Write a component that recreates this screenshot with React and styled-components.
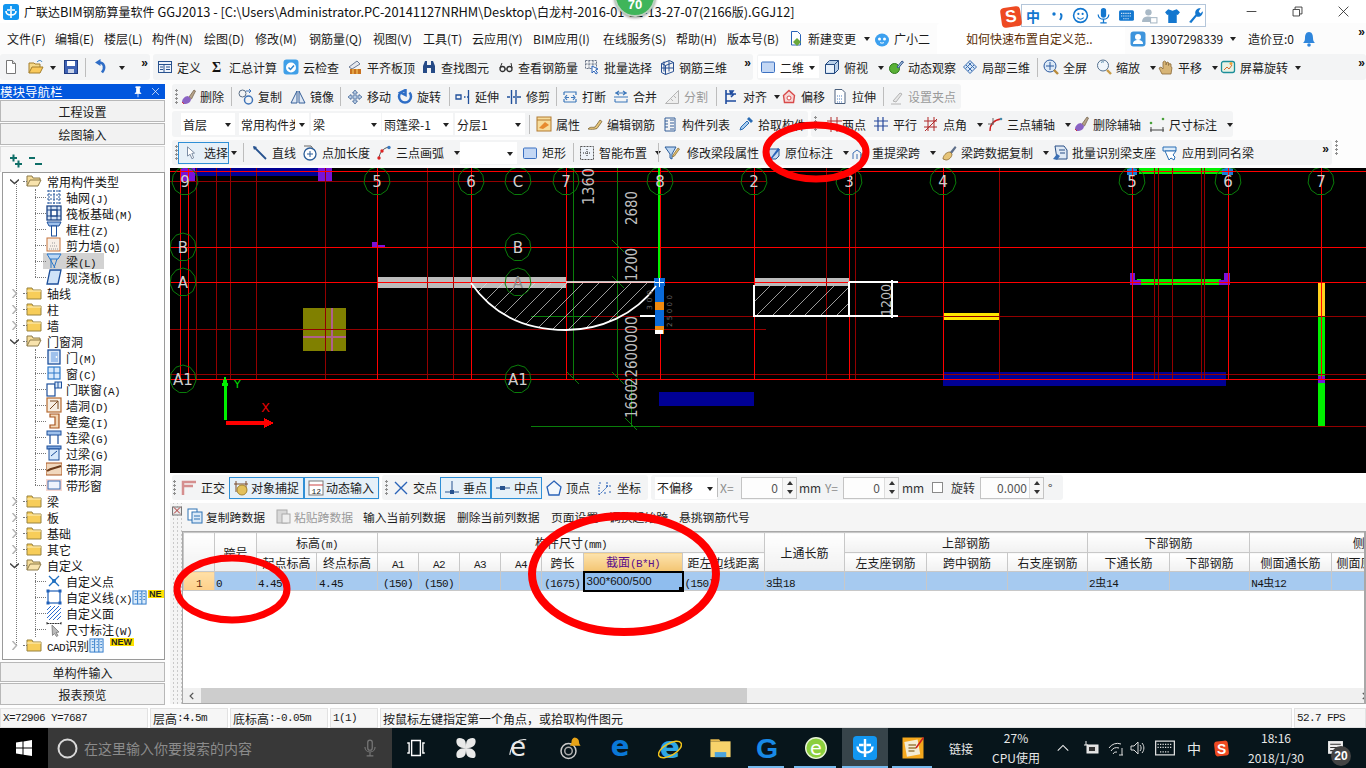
import React from "react";
import styled, { createGlobalStyle } from "styled-components";

const Global = createGlobalStyle`
  html, body { margin: 0; padding: 0; background: #fff; }
  body { font-family: "Noto Sans CJK SC", "Noto Sans", sans-serif; font-size: 12px; color: #1c1c1c; }
  * { box-sizing: border-box; }
`;

/* ---------- generic parts ---------- */
const Root = styled.div`
  position: relative; width: 1366px; height: 768px; overflow: hidden;
  display: flex; flex-direction: column; background: #fdfdfd;
`;
const Svg = styled.svg`
  width: ${p => p.$s || 16}px; height: ${p => p.$s || 16}px; flex: none; display: block;
  margin-left: ${p => p.$ml || 0}px; margin-right: ${p => p.$mr || 0}px;
`;
const Ic = ({ n, s, ml, mr }) => <Svg $s={s} $ml={ml} $mr={mr} viewBox="0 0 16 16">{I[n]}</Svg>;

const TitleBar = styled.div`
  height: 23px; flex: none; display: flex; align-items: center; background: #fff; padding-left: 3px;
`;
const TitleText = styled.div`
  margin-left: 5px; font-size: 12px; white-space: nowrap; color: #111;
`;
const TitleLatin = styled.span`
  font-size: 12.8px;
`;
const WinButtons = styled.div`
  margin-left: auto; display: flex; height: 23px;
`;
const WinBtn = styled.div`
  width: 46px; display: flex; align-items: center; justify-content: center; color: #222;
`;
const MenuBar = styled.div`
  height: 31px; flex: none; display: flex; align-items: center; background: #fcfcfc; position: relative;
`;
const MenuItem = styled.div`
  width: ${p => p.$w}px; flex: none; white-space: nowrap; display: flex; align-items: center; gap: 4px;
  margin-left: ${p => p.$ml || 0}px; color: #1a1a1a; font-size: 12px;
`;
const Hint = styled.div`
  width: 188px; height: 31px; margin-right: 5px; background: #fff; border-radius: 4px 4px 0 0; flex: none;
  color: #5a2e05; display: flex; align-items: center; padding-left: 29px;
`;
const Chev = styled.span`
  font: bold 12px/10px "Liberation Sans", sans-serif; letter-spacing: -1px; color: #111; flex: none;
  position: absolute; right: ${p => p.$r || 0}px; top: ${p => p.$t || 4}px;
`;
const Row = styled.div`
  height: ${p => p.$h}px; flex: none; display: flex; align-items: flex-start; padding-left: ${p => p.$pl || 0}px;
`;
const Seg = styled.div`
  position: relative; height: ${p => p.$h || 26}px; width: ${p => p.$w ? p.$w + "px" : "auto"}; flex: none;
  display: flex; align-items: center; background: #f3f4f5; border-radius: 3px;
  margin-left: ${p => p.$ml || 0}px; padding-left: ${p => p.$pl || 0}px;
`;
const Grip = styled.div`
  width: ${p => p.$w || 8}px; height: 16px; flex: none; margin-left: ${p => p.$ml || 0}px;
  background: radial-gradient(circle at 2.5px 1.5px, #8f8f8f 1px, transparent 1.2px) 0 0 / 5px 4px repeat-y;
`;
const ToolBox = styled.div`
  width: ${p => p.$w}px; flex: none; height: 20px; display: flex; align-items: center; white-space: nowrap;
  gap: ${p => p.$g ?? 4}px; color: ${p => p.$off ? "#9a9a9a" : "#1c1c1c"}; font-size: 12px;
`;
const Drop = styled.span`
  width: 0; height: 0; flex: none; margin-left: ${p => p.$ml ?? 6}px; margin-top: 1px;
  border-left: 3px solid transparent; border-right: 3px solid transparent; border-top: 4px solid #222;
`;
const Tool = ({ i, t, w, off, g, drop, dm }) => (
  <ToolBox $w={w} $off={off} $g={g}>
    {i && <Ic n={i} />}
    {t && <span>{t}</span>}
    {drop && <Drop $ml={dm} />}
  </ToolBox>
);
const Sep = styled.div`
  width: ${p => p.$w}px; height: 19px; flex: none; margin-left: ${p => p.$ml || 0}px;
  border-left: 1px solid #bdbdbd;
`;
const Flat = styled.div`
  width: ${p => p.$w}px; height: 22px; flex: none; display: flex; align-items: center; gap: ${p => p.$g ?? 4}px;
  padding-left: ${p => p.$pl ?? 5}px; border: 1px solid #2e8fd6; background: ${p => p.$bg || "#e6f0f8"};
  margin-left: ${p => p.$ml || 0}px; white-space: nowrap;
`;
const Combo = styled.div`
  width: ${p => p.$w}px; height: 22px; flex: none; margin-right: ${p => p.$mr || 0}px; background: #fff;
  display: flex; align-items: center; padding-left: 2px; position: relative; white-space: nowrap;
  &::after {
    content: ""; position: absolute; right: 4px; top: 10px; border-left: 3px solid transparent;
    border-right: 3px solid transparent; border-top: 4px solid #222;
  }
`;
const ComboText = styled.span`
  display: block; width: calc(100% - 14px); overflow: hidden;
`;
const Body = styled.div`
  height: 624px; flex: none; display: flex;
`;

/* ---------- module navigator ---------- */
const Nav = styled.aside`
  width: 165px; flex: none; display: flex; flex-direction: column;
`;
const NavHead = styled.div`
  height: 15px; flex: none; background: #0257de; color: #fff; display: flex; align-items: center;
  font-size: 12.5px; line-height: 15px; padding-right: 3px; margin-bottom: 1px; white-space: nowrap;
`;
const NavBtn = styled.div`
  height: ${p => p.$h}px; flex: none; margin-bottom: 1px; border: 1px solid #b8b8b8; background: #f2f2f2;
  display: flex; align-items: center; justify-content: center; color: #1c1c1c; font-size: 12px;
`;
const TreeBar = styled.div`
  height: 26px; flex: none; background: #f7f7f7; display: flex; align-items: center; gap: 3px; padding: 2px 0 0 7px;
  border: 1px solid #ddd; border-bottom: 0;
`;
const Tree = styled.div`
  height: 488px; flex: none; margin: 0 0 2px 2px; border: 1px solid #9a9a9a;
  background: #fff; overflow: hidden; position: relative;
`;
const Mono = styled.span`
  font-family: "Liberation Mono", monospace; font-size: 11px; letter-spacing: -.6px;
`;
const Sim = ({ t }) => t.split(/([\x00-\x7f]+)/).map((p, k) =>
  /^[\x00-\x7f]+$/.test(p) ? <Mono key={k}>{p}</Mono> : <span key={k}>{p}</span>);
const TreeRow = styled.div`
  height: 16px; display: flex; align-items: center; position: relative; white-space: nowrap; font-size: 12px;
  padding-left: ${p => p.$child ? 43 : 7}px; color: #151515;
  &::before {
    content: ""; position: absolute; top: 8px; left: ${p => p.$child ? 32 : 20}px;
    width: ${p => p.$child ? 11 : 4}px; border-top: 1px dotted #777;
  }
`;
const Guide = styled.div`
  position: absolute; left: ${p => p.$l}px; top: ${p => p.$t}px; height: ${p => p.$h}px; border-left: 1px dotted #777;
`;
const Chevron = styled.svg`
  width: 9px; height: 9px; flex: none; margin-right: 7px;
`;
const Sel = styled.span`
  display: flex; align-items: center; height: 16px; background: ${p => p.$on ? "#d2d2d2" : "transparent"};
  margin-left: -3px; padding: 0 ${p => p.$on ? 8 : 0}px 0 3px; gap: ${p => p.$child ? 4 : 5}px;
`;
const NewTag = styled.span`
  position: absolute; top: ${p => p.$t ?? 1}px; left: ${p => p.$l}px; font: bold 9px/8px "Liberation Sans", sans-serif;
  background: #ffe100; color: #222; padding: 0 1px; overflow: hidden; width: ${p => p.$w}px; height: 8px;
`;

/* ---------- main column ---------- */
const Gutter = styled.div`
  width: 5px; flex: none;
`;
const Main = styled.main`
  flex: 1; min-width: 0; display: flex; flex-direction: column;
`;
const Canvas = styled.svg`
  display: block; width: 1196px; height: 305px; flex: none; background: #000;
`;
const SnapBar = styled.div`
  height: 30px; flex: none; padding: 2px 0 0 2px; display: flex; align-items: flex-start; background: #fff;
`;
const Spin = styled.div`
  width: ${p => p.$w}px; height: 22px; flex: none; border: 1px solid #c4c4c4; background: #fdfdfd; position: relative;
  text-align: right; padding-right: ${p => p.$pr || 18}px; line-height: 20px; color: #555; font-size: 12px;
  margin-left: ${p => p.$ml || 0}px;
  &::after {
    content: ""; position: absolute; right: 0; top: 0; bottom: 0; width: 13px; border-left: 1px solid #ddd;
    background: #f6f6f6;
  }
`;
const SpinArrows = styled.span`
  position: absolute; right: 3px; top: 3px; z-index: 1; display: flex; flex-direction: column; gap: 5px;
  &::before { content: ""; border-left: 3px solid transparent; border-right: 3px solid transparent; border-bottom: 4px solid #333; }
  &::after { content: ""; border-left: 3px solid transparent; border-right: 3px solid transparent; border-top: 4px solid #333; }
`;
const SnapLabel = styled.span`
  flex: none; color: ${p => p.$dim ? "#8c8c8c" : "#333"}; margin-left: ${p => p.$ml || 0}px; width: ${p => p.$w ? p.$w + "px" : "auto"};
  white-space: nowrap;
`;
const Check = styled.span`
  width: 11px; height: 11px; flex: none; border: 1px solid #8a8a8a; background: #fff; margin-left: ${p => p.$ml || 0}px;
`;

const TablePanel = styled.section`
  height: 201px; flex: none; display: flex; background: #f4f4f4; position: relative;
`;
const TableGrip = styled.div`
  width: 12px; flex: none; padding: 3px 0 0 2px;
  background: radial-gradient(circle at 4px 2px, #c9c9c9 1px, transparent 1.2px) 0 14px / 4px 4px;
`;
const TableMain = styled.div`
  flex: 1; min-width: 0; display: flex; flex-direction: column;
`;
const TableTools = styled.div`
  height: 28px; flex: none; display: flex; align-items: center; padding-left: 5px; padding-bottom: 2px; background: #f5f5f5;
`;
const TableAction = styled.div`
  width: ${p => p.$w}px; flex: none; display: flex; align-items: center; gap: 3px; white-space: nowrap;
  color: ${p => p.$off ? "#9a9a9a" : "#1c1c1c"}; font-size: 11.8px;
`;
const TableWrap = styled.div`
  flex: 1; min-height: 0; background: #fff; border: 1px solid #a8a8a8; border-right-width: 2px; overflow: hidden; position: relative;
  display: flex; flex-direction: column;
`;
const Grid = styled.table`
  table-layout: fixed; border-collapse: collapse; width: ${p => p.$w}px; font-size: 12px; flex: none;
  th, td { border: 1px solid #c8c8c8; padding: 0; text-align: center; white-space: nowrap; overflow: hidden; }
  th { font-weight: 400; background: linear-gradient(#fff, #f1f1f1); color: #1c1c1c; }
  td { background: #a6caf0; height: 19px; color: #141414; }
`;
const TH = styled.tr`
  height: ${p => p.$h}px;
`;
const HotTh = styled.th`
  && { background: linear-gradient(#fde3ae, #f3c572); color: #5b0f8a; }
`;
const RowHead = styled.td`
  && { background: linear-gradient(#ffe0a8, #fdcf88); color: #5a2a10; }
`;
const LeftCell = styled.td`
  && { text-align: left; padding-left: ${p => p.$pl ?? 1}px; }
`;
const ActiveCell = styled.td`
  && { background: #8fbdee; text-align: left; padding-left: 2px; border: 2px solid #000; font-family: "Liberation Sans", sans-serif; font-size: 11.5px; position: relative; }
`;
const Handle = styled.span`
  position: absolute; right: -1px; bottom: -1px; width: 4px; height: 4px; background: #000; border: 0;
`;
const Bar = styled.span`
  font-size: 11px;
`;
const Filler = styled.div`
  flex: 1; min-height: 0; background: #fff;
`;
const HScroll = styled.div`
  height: 15px; flex: none; display: flex; align-items: center; background: #f0f0f0; margin-left: 0;
`;
const ScrollBtn = styled.div`
  width: 18px; flex: none; display: flex; justify-content: center; margin-left: ${p => p.$ml || 0}px;
`;
const Thumb = styled.div`
  width: 546px; height: 15px; flex: none; background: #cdcdcd;
`;

/* ---------- status + taskbar ---------- */
const StatusBar = styled.div`
  height: 20px; flex: none; display: flex; gap: 2px; background: #fff; margin-top: 0;
`;
const StatusCell = styled.div`
  width: ${p => p.$w}px; flex: none; border: 1px solid #e2e2e2; background: #f6f6f6; padding-left: 2px; display: flex; align-items: center;
  white-space: nowrap; font-size: 12px; color: #1a1a1a;
`;
const Taskbar = styled.footer`
  height: 40px; flex: none; display: flex; background: #07151b; color: #e8e8e8; margin-top: 0;
`;
const StartBtn = styled.div`
  width: 48px; flex: none; background: #000; display: flex; align-items: center; justify-content: center;
`;
const Search = styled.div`
  width: 344px; flex: none; background: #383838; display: flex; align-items: center; padding-left: 9px; gap: 6px; color: #8b8b8b;
  font-size: 14px; letter-spacing: 0;
`;
const SearchMic = styled.span`
  margin-left: auto; margin-right: 13px; display: flex;
`;
const Slot = styled.div`
  width: ${p => p.$w}px; flex: none; display: flex; align-items: center; justify-content: center; position: relative;
  background: ${p => p.$active ? "#37444a" : "transparent"};
  &::after {
    content: ""; position: absolute; left: ${p => p.$active ? 0 : 4}px; right: ${p => p.$active ? 0 : 6}px; bottom: 0; height: 2px;
    background: ${p => p.$run ? "#76b9ed" : "transparent"};
  }
`;
const TrayText = styled.div`
  width: ${p => p.$w}px; flex: none; display: flex; flex-direction: column; align-items: center; justify-content: center;
  font-size: ${p => p.$fs || 12}px; line-height: ${p => p.$lh || 19}px; color: #e8e8e8; white-space: nowrap;
`;
const Notify = styled.div`
  width: 50px; flex: none; position: relative; display: flex; align-items: center; padding-left: 11px;
`;
const NotifyBadge = styled.span`
  position: absolute; left: 15px; top: 18px; width: 20px; height: 20px; border-radius: 50%; background: #444; color: #fff;
  font: bold 12px/20px "Liberation Sans", sans-serif; text-align: center;
`;

/* ---------- overlays ---------- */
const Annot = styled.svg`
  position: absolute; left: 0; top: 0; width: 1366px; height: 768px; pointer-events: none;
`;
const Badge = styled.div`
  position: absolute; left: 614px; top: -25px; width: 42px; height: 42px; border-radius: 50%; background: #3fb55a;
  border: 2px solid #bcd0c0; box-shadow: 0 1px 3px rgba(0,0,0,.4); color: #fff; font: bold 13px/1 "Liberation Sans", sans-serif;
  display: flex; align-items: flex-end; justify-content: center; padding-bottom: 4px;
`;
const Ime = styled.div`
  position: absolute; left: 1001px; top: 4px; display: flex; align-items: center; height: 23px;
`;
const ImeLogo = styled.div`
  width: 20px; height: 20px; background: #ee4a22; border-radius: 4px; transform: rotate(-8deg); color: #fff;
  font: bold 17px/20px "Liberation Sans", sans-serif; text-align: center; flex: none; z-index: 1; margin-top: 3px;
`;
const ImeBody = styled.div`
  width: 185px; height: 23px; background: #fff; border: 1px solid #b4c6da; display: flex; align-items: center; padding-left: 4px; gap: 6px;
  color: #1a6dc8;
`;
const ImeZh = styled.span`
  font-size: 14px; font-weight: 700; color: #1377cf; line-height: 16px; margin-right: 4px;
`;

/* ---------- icons ---------- */
const I = {
  logo: <><rect x="0" y="0" width="16" height="16" rx="2.5" fill="#1296f0"/><path d="M8 2v12M3 7c0 4 3 4 5 4s5 0 5-4M4 6h3M9 6h3" stroke="#fff" strokeWidth="1.6" fill="none"/></>,
  page: <><path d="M3.5 1.5h6l3 3v10h-9z" fill="#fff" stroke="#777"/><path d="M9.5 1.5v3h3" fill="#ddd" stroke="#777"/></>,
  open: <><path d="M1 14V4h5l1 1h5v3" fill="#f5d98a" stroke="#a47f2d"/><path d="M1 14l3-6h11l-3 6z" fill="#f9c95c" stroke="#a47f2d"/><path d="M9 3c2-2 4-2 5 0" stroke="#2a7ac0" fill="none"/></>,
  save: <><rect x="1.5" y="1.5" width="13" height="13" fill="#3f62b4" stroke="#1e3a80"/><rect x="4" y="2" width="8" height="5" fill="#fff"/><rect x="5" y="10" width="6" height="4" fill="#c9d3e8"/></>,
  undo: <><path d="M6 3.5c5 0 7 5 3 10" stroke="#2f6dc6" strokeWidth="2.6" fill="none"/><path d="M7.5 0v7L2 3.5z" fill="#2f6dc6"/></>,
  define: <><rect x="1.5" y="2.5" width="13" height="11" fill="#eef3fb" stroke="#28528f"/><path d="M1.5 5.5h13M7 5.5v8M3 8h3M3 10.5h3M9 8h4M9 10.5h4" stroke="#28528f"/></>,
  sigma: <text x="3" y="13" fontSize="14" fontWeight="700" fontFamily="Liberation Serif" fill="#111">Σ</text>,
  cloud: <><rect x="0.5" y="0.5" width="15" height="15" rx="3" fill="#3f9fe8"/><circle cx="8" cy="8.5" r="5" fill="#fff"/><path d="M5.5 8.5l2 2 3.5-4" stroke="#2e86d0" strokeWidth="1.5" fill="none"/></>,
  level: <><path d="M2 8l8-6 3 3-8 5z" fill="#e7e9ee" stroke="#6a7a96"/><rect x="3" y="10" width="11" height="5" fill="#c8721f"/><path d="M6 10v5M10 10v5" stroke="#fbd46a"/></>,
  binoc: <path d="M2 14V7l2-5h2v12zM14 14V7l-2-5h-2v12zM6 6h4v3H6z" fill="#254a86"/>,
  glasses: <><circle cx="4.5" cy="10" r="2.5" fill="none" stroke="#333" strokeWidth="1.3"/><circle cx="11.5" cy="10" r="2.5" fill="none" stroke="#333" strokeWidth="1.3"/><path d="M7 10h2M2 9l2-5M14 9l-1-5" stroke="#333"/></>,
  batch: <><path d="M1.5 1.5h11v8h-11zM5 1.5v8M9 1.5v8M1.5 5h11" stroke="#6a7587" fill="none" strokeDasharray="2 1"/><path d="M8 7l6 3-2.5 1 2 3-1.5 1-2-3-2 2z" fill="#fff" stroke="#2a63b8"/></>,
  grid3d: <path d="M2.5 4.5l8-3 4 2v9l-8 3-4-2zM2.5 4.5l4 2v9M6.5 6.5l8-3M5 2.5v10M10 1.5v11M2 9h13" stroke="#274f92" fill="none"/>,
  rect2d: <rect x="1.5" y="3" width="13" height="10.5" rx="1" fill="#c3d7f4" stroke="#3b70c1"/>,
  cube: <><path d="M1.5 5.5l4-4h9v9l-4 4h-9z" fill="#b8d0ea" stroke="#244a80"/><path d="M2 5.5h8v8h-8z" fill="#e8f1fb"/><path d="M1.5 5.5h9v9M10.5 5.5l4-4" fill="none" stroke="#244a80"/></>,
  orbit: <><circle cx="6.5" cy="9.5" r="5" fill="#59b036" stroke="#2e7a1b"/><path d="M9 8l5-6 1.5 1-5 6z" fill="#a8c3e0" stroke="#33558c"/></>,
  box3d: <path d="M1.5 8l6.5-6.5 6.5 6.5-6.5 6.5z M4 6l6 6M6.500 3.500l6 6M12 6l-6 6M9.500 3.500l-6 6" fill="#d7e6f6" stroke="#3c6fb2"/>,
  full: <><circle cx="7" cy="7" r="6" fill="#dce9f7" stroke="#2c5a9f"/><path d="M7 3v8M3 7h8" stroke="#2c5a9f"/><path d="M11 11l4 4" stroke="#b88a3a" strokeWidth="2.4"/></>,
  zoom: <><circle cx="7" cy="6.5" r="5.5" fill="#f0f6fb" stroke="#55718f"/><path d="M11 11l4 4" stroke="#c79a45" strokeWidth="2.4"/><path d="M5 3.5a3 3 0 0 1 3-.5" stroke="#58a" fill="none"/></>,
  hand: <path d="M4 15l-3-6 2-1 2 2V3l1.5-1L8 3v3l1-3 1.500.500V6.500l1-2 1.500.500v3l1 .500-1 6.500z" fill="#d7b577" stroke="#8a6a38" strokeWidth=".8"/>,
  screen: <><rect x="1.5" y="2.5" width="13" height="11" rx="2" fill="#e8f2e4" stroke="#1c8f9a" strokeWidth="1.3"/><path d="M4 11l3-3 2 2 3-4" stroke="#d8682d" fill="none"/><circle cx="11" cy="4.5" r="1.5" fill="#f0a23c"/></>,
  newdoc: <><path d="M3.5 .5h6l3 3V14h-9z" fill="#fff" stroke="#2a63b8"/><path d="M9 7l4 4-4 4-4-4z" fill="#6aa83c"/></>,
  blob: <><ellipse cx="8" cy="9" rx="7" ry="6.5" fill="#3ca0ef"/><circle cx="5.5" cy="8" r="1.5" fill="#fff"/><circle cx="10.5" cy="8" r="1.5" fill="#fff"/><path d="M6 11.5c1 .8 3 .8 4 0" stroke="#fff" fill="none"/></>,
  user: <><rect x="0.5" y="0.5" width="15" height="15" rx="3" fill="#3d94dc"/><circle cx="8" cy="6" r="3" fill="#fff"/><path d="M3 13c0-3 2-4 5-4s5 1 5 4z" fill="#fff"/></>,
  bell: <><path d="M8 1c3 0 4 3 4 6s1 4 2 5H2c1-1 2-2 2-5s1-6 4-6z" fill="#2f86dc"/><circle cx="8" cy="14" r="1.8" fill="#2f86dc"/></>,
  brush: <><path d="M9 8l5-7 1.5 1-4 8z" fill="#b6a38a" stroke="#6c5a42" strokeWidth=".7"/><path d="M2 13c0-3 3-6 6-6l3 3c0 3-3 5-7 5z" fill="#8a63c4"/><path d="M2 13l2 2" stroke="#c34" /></>,
  copy: <><circle cx="4.5" cy="4.5" r="3.5" fill="none" stroke="#5a6e86"/><circle cx="10.5" cy="11" r="4" fill="none" stroke="#3f74b8" strokeWidth="1.5"/><path d="M8 2h5M11 0l2 2-2 2" stroke="#3f74b8" fill="none"/></>,
  mirror: <><path d="M7 2L1 14h6zM9 2l6 12H9z" fill="#dfe8f4" stroke="#355f98"/></>,
  move: <path d="M8 1l2.500 3H9v3h3V5.500L15 8l-3 2.500V9H9v3h1.500L8 15l-2.500-3H7V9H4v1.500L1 8l3-2.500V7h3V4H5.500z" fill="#b9cce3" stroke="#345a8f" strokeWidth=".7"/>,
  rotate: <path d="M3.500 3.500a6 6 0 1 0 9 0M8.500 6V1l-5 2.500z" stroke="#2f6ec6" strokeWidth="2.500" fill="none"/>,
  extend: <path d="M1 6h5v4H1zM13.500 1v14M9 8h1.500M12 8h1" stroke="#21509b" fill="none" strokeWidth="1.300"/>,
  trim: <path d="M5.500 1v14M10 1v14M1 8h3M7 8h2M11 8h4" stroke="#21509b" strokeWidth="1.400" fill="none"/>,
  breakL: <path d="M2 3h12v3M2 13h12M2 3v3M14 10v3M2 10v3M4 8.500h3M9 8.500h3M5 6l-2 2.500L5 11M11 6l2 2.500L11 11" stroke="#3b76ba" fill="none" strokeWidth="1.200"/>,
  merge: <path d="M2 4h12M2 13h12v-3M2 10v3M6 2l-3 2 3 2M10 2l3 2-3 2M1 8h14" stroke="#3b76ba" fill="none" strokeWidth="1.100"/>,
  split: <path d="M1.500 14.500h13v-13zM6 9l3 3M9 6l3 3" fill="#eee" stroke="#b5b5b5"/>,
  align: <path d="M3 1v14M3 5h10M3 12h10M7 2h3l-2 3z M8 8l3-3" stroke="#1e4b9e" strokeWidth="1.600" fill="none"/>,
  offset: <><path d="M8 1.500l5.500 5-1 7h-9l-1-7z" fill="#f7d7d7" stroke="#d84a4a" strokeWidth="1.400"/><circle cx="8" cy="9" r="2" fill="#fff" stroke="#d84a4a"/></>,
  stretch: <><path d="M3 .500h7l3 3v11H3z" fill="#fff" stroke="#4a5f7c"/><path d="M5 7h6M5 10h6M5 13h6" stroke="#4a7cc0" strokeDasharray="1 1"/></>,
  gripG: <path d="M3 15h10M5 12l7-8 2 1-6 8z" fill="#e7e7e7" stroke="#b4b4b4"/>,
  attr: <><rect x="1" y="1" width="14" height="14" fill="#f7dc9c" stroke="#b27a30"/><path d="M3 12l6-6 4 3-6 4z" fill="#e78a2f"/><path d="M1 4h14" stroke="#b27a30"/></>,
  pen: <><path d="M1 13c3-3 4-1 7-2l5-7 2 1.500-5 7c-3 1-6 1-9 .500z" fill="#e7c579" stroke="#7a6536" strokeWidth=".8"/></>,
  list: <path d="M3 2h10v13H3zM3 5h3M3 8h3M3 11h3M8 4h4M8 7h4M8 10h4M8 13h4" stroke="#355e98" fill="none"/>,
  dropper: <><path d="M2 14l1-3 6-6 2 2-6 6z" fill="#a9cdee" stroke="#2b6cb4"/><path d="M9 3l2-2 4 4-2 2z" fill="#2b6cb4"/></>,
  two: <path d="M1 5h15M1 11h15M5 1v15M11 1v15" stroke="#b02828" fill="none"/>,
  par: <path d="M1 5h14M1 10h14M5 1v14M10 1v14" stroke="#27489c" strokeWidth="1.200" fill="none"/>,
  ang: <path d="M1 5h13M1 11h13M5 1v14M11 1v14M2 15L14 3" stroke="#b02828" fill="none"/>,
  arcx: <><path d="M3 15c0-7 4-11 11-12" stroke="#d01e1e" fill="none" strokeWidth="1.400"/><path d="M1 8h6M6 2v6" stroke="#666"/><circle cx="14" cy="3" r="1.300" fill="#48a"/></>,
  dim: <><path d="M1 14h14M2 11v5M14 11v5" stroke="#444" fill="none"/><circle cx="2" cy="7" r="1.300" fill="#49a13a"/><circle cx="14" cy="3" r="1.300" fill="#49a13a"/></>,
  cursor: <path d="M4 1l8 7-3 .500 2 5-2 1-2-5-3 2z" fill="#fff" stroke="#6c7f98"/>,
  line: <><path d="M2 2l12 12" stroke="#27528f" strokeWidth="1.800"/><path d="M1 1l4 1-3 3z" fill="#27528f"/></>,
  ptlen: <><circle cx="8" cy="9" r="6" fill="#fff" stroke="#2b5d99" strokeWidth="1.300"/><path d="M8 6v6M5 9h6" stroke="#2b5d99"/><path d="M2 1h7l1.500 2" stroke="#666" fill="none"/></>,
  arc: <><path d="M3 14C3 8 7 3 13 2" stroke="#555" fill="none"/><circle cx="3" cy="13" r="1.700" fill="#d22"/><circle cx="6" cy="6" r="1.700" fill="#d22"/><circle cx="13" cy="2.500" r="1.700" fill="#3a78c0"/></>,
  smart: <><rect x="1.500" y="1.500" width="13" height="13" fill="#eef3f9" stroke="#555" strokeDasharray="2 1"/><path d="M8 4v8M4 8h8" stroke="#222" strokeDasharray="1 1"/></>,
  funnel: <><path d="M1 2h11L8 9v5l-2-1V9z" fill="#bcd6f2" stroke="#2b5d99"/><path d="M9 10l5-7 1.500 1-5 7-2 1z" fill="#e8c067" stroke="#7a6536" strokeWidth=".7"/></>,
  mark: <><path d="M1 14V7l4-3h9v7l-3 3z" fill="#c8daf0" stroke="#28558f"/><path d="M5 14l8-11 2 1.500-8 9z" fill="#2a63b8"/></>,
  reup: <><path d="M1 14v-6l4-3 4 3v6M5 14V9M9 14V9" stroke="#3d6fb4" fill="none"/><path d="M10 9l4-7 1.500 1-4 7-2 1z" fill="#e8c067" stroke="#7a6536" strokeWidth=".6"/></>,
  broom: <><path d="M9 7l5-6 1.500 1.500L11 8.500z" fill="#5f6f8a"/><path d="M2 14c0-3 3-7 7-7l2 2c0 3-3 6-6 6z" fill="#e7c579" stroke="#8a6a30" strokeWidth=".8"/></>,
  batchsup: <><path d="M3 1h9l3 4v9H5z" fill="#dfe9f5" stroke="#284f86"/><path d="M1 14l4-5 3 2-3 4z" fill="#3a6fb4"/><path d="M7 5h6M8 8h5" stroke="#284f86"/></>,
  apply: <><path d="M1 2h13v4H1z" fill="#dcecfa" stroke="#2b6fb4"/><path d="M3 6l4 9 2-2 3 2 1-3-2-2 3-4z" fill="#fff" stroke="#2b6fb4"/></>,
  ortho: <path d="M2 15V2h13M2 6h10" stroke="#d58f8f" strokeWidth="2.500" fill="none"/>,
  snap: <><path d="M3 1v11M13 1v11M1 4h14" stroke="#7a4a2a"/><circle cx="9" cy="10" r="5" fill="#e3c05b" stroke="#a5842f"/></>,
  input: <><rect x="1" y="1" width="14" height="14" fill="#fff" stroke="#7a7a7a"/><path d="M1 5h14" stroke="#c44"/><text x="3.500" y="13.500" fontSize="8" fontFamily="Liberation Mono" fill="#222">12</text></>,
  cross: <path d="M2 2l12 12M14 2L2 14" stroke="#2a63b8" strokeWidth="1.400"/>,
  perp: <><path d="M8 1v10" stroke="#27528f"/><path d="M1 12h14" stroke="#27528f"/><rect x="6" y="10" width="4" height="4" fill="#27528f"/></>,
  mid: <><path d="M1 8h14" stroke="#27528f"/><rect x="5" y="6" width="5" height="4" fill="#27528f"/></>,
  apex: <path d="M8 1l7 6-2 8H3L1 7z" fill="#f4f8fc" stroke="#2a63b8" strokeWidth="1.300"/>,
  coord: <path d="M2 15V5M2 15l9-9M10 2v6M14 6H8M3 2v2M13 11v2M7 13h2" stroke="#2a63b8" fill="none" strokeDasharray="2 1"/>,
  copyT: <><rect x="1" y="1" width="9" height="11" fill="#fff" stroke="#2f73b4"/><rect x="5" y="4" width="10" height="11" fill="#dbeaf8" stroke="#2f73b4"/><path d="M7 8h6M7 11h6" stroke="#2f73b4"/></>,
  pasteT: <><rect x="2" y="2" width="10" height="13" fill="#d8d8d8" stroke="#aaa"/><rect x="7" y="6" width="8" height="9" fill="#eee" stroke="#aaa"/></>,
  closeX: <><rect x=".500" y=".500" width="9" height="8" fill="#e8e8e8" stroke="#777"/><path d="M2 1l6 6M8 1L2 7" stroke="#a33"/></>,
  folderO: <><path d="M1 13V3h5l1 2h7v2" fill="#f6dd9a" stroke="#8d7a49"/><path d="M1 13l3-6h11l-3 6z" fill="#f8e3ad" stroke="#8d7a49"/></>,
  folderC: <><path d="M1 14V3h5l1 2h8v9z" fill="#f7cd59" stroke="#98823f"/><path d="M1 6h14" stroke="#fff1c2"/></>,
  tAxis: <path d="M1 2h14M1 6h14M1 10h14M1 14h14M3 1v14M8 1v14M13 1v14" stroke="#2b5b9e" fill="none" strokeDasharray="2 1"/>,
  tRaft: <><rect x="1" y="1" width="14" height="14" fill="#d6e3f4" stroke="#1d4687" strokeWidth="1.300"/><rect x="5" y="5" width="6" height="6" fill="#fff" stroke="#1d4687"/><path d="M1 5h14M1 11h14M5 1v14M11 1v14" stroke="#1d4687"/></>,
  tCol: <><path d="M1 1h14l-2 4H3z" fill="#9fc1ec" stroke="#1d4f9a"/><rect x="5.500" y="5" width="5" height="10" fill="#fff" stroke="#1d4f9a"/></>,
  tWall: <><rect x="1" y="1" width="13" height="13" fill="#f8f0e8" stroke="#c5723a"/><path d="M3 12h9M4 9h7M6 6h4" stroke="#999" strokeDasharray="1 1"/></>,
  tBeam: <><path d="M1 1h14l-3 5H4z" fill="#bdd7f3" stroke="#2b77c8"/><path d="M4 6l5 9M11 6l-3 9M5 6v9" stroke="#2b77c8" fill="none"/></>,
  tSlab: <path d="M4 1h11l-3 14H1z" fill="#cfe3f8" stroke="#1d4f9a" strokeWidth="1.300"/>,
  tDoor: <><rect x="2" y="1" width="12" height="14" fill="#dbe8f8" stroke="#1d4f9a" strokeWidth="1.300"/><rect x="5" y="3" width="7" height="10" fill="#9fc1ec"/><circle cx="10.500" cy="8" r=".9" fill="#fff"/></>,
  tWin: <><rect x="2" y="2" width="12" height="12" fill="#d8e9fb" stroke="#2b77c8" strokeWidth="1.200"/><path d="M8 2v12M2 8h12" stroke="#2b77c8"/></>,
  tDW: <><rect x="1" y="3" width="8" height="12" fill="#fff" stroke="#1d4f9a" strokeWidth="1.200"/><rect x="9" y="1" width="6.500" height="6" fill="#d8e9fb" stroke="#1d4f9a"/><path d="M12 1v6" stroke="#1d4f9a"/></>,
  tHole: <><rect x="1" y="1" width="14" height="14" fill="#f7eee2" stroke="#b56a30" strokeWidth="1.200"/><path d="M4 12l8-8M4 4h8v8" stroke="#7a4a20" fill="none"/></>,
  tNiche: <path d="M4 1h9v14H4v-3h5V4H4z" fill="#f3d8b8" stroke="#a8551f" strokeWidth="1.200"/>,
  tLink: <><rect x="1" y="2" width="14" height="4" fill="#9fc1ec" stroke="#1d4f9a"/><path d="M4 6v9M12 6v9" stroke="#1d4f9a" strokeWidth="1.200"/></>,
  tLintel: <><rect x="1" y="1" width="14" height="3" fill="#7fa8e0" stroke="#1d4f9a"/><rect x="3" y="4" width="10" height="11" fill="#d8e9fb" stroke="#1d4f9a"/><path d="M5 11l6-5" stroke="#1d4f9a"/></>,
  tStripH: <><rect x="0" y="2" width="16" height="12" fill="#f1d8be" stroke="#a8551f"/><path d="M1 10c4-3 9-3 14-5" stroke="#6a3a1a" strokeWidth="2" fill="none"/></>,
  tStripW: <><rect x="0" y="2" width="16" height="12" fill="#f6d6cf"/><rect x="2" y="4" width="12" height="8" fill="#eef3fc" stroke="#3c6fb4"/></>,
  tPt: <><path d="M3 3l10 10M13 3L3 13" stroke="#1f6fc0" strokeWidth="1.300"/><circle cx="8" cy="8" r="2" fill="#1f6fc0"/></>,
  tLine: <><rect x="2" y="2" width="12" height="12" fill="#fff" stroke="#1f5fb8" strokeWidth="1.200"/>{[[2,2],[14,2],[2,14],[14,14]].map(([x,y]) => <rect key={x+"-"+y} x={x-1.5} y={y-1.5} width="3" height="3" fill="#1f5fb8"/>)}</>,
  tFace: <path d="M1 5l4-4M1 9l8-8M1 13L13 1M3 15L15 3M7 15l8-8M11 15l4-4" stroke="#2b6cd0"/>,
  tDim: <><path d="M1 1v3M15 1v3M1 2.500h14" stroke="#333" strokeDasharray="2 .6"/><path d="M6 4l7 7-3 .500 2 3-1.500 1-2-3-2 2z" fill="#bbb" stroke="#888"/></>,
  news: <><rect x="1" y="1" width="14" height="14" fill="#dcecfb" stroke="#2b77c8"/><path d="M6 1v14M10.500 1v14M3 4h2M3 7h2M3 10h2M8 4h1.500M8 7h1.500M8 10h1.500M12 4h2M12 7h2M12 10h2" stroke="#2b77c8"/></>,
  plusp: <path d="M2 5h7M5.500 1.500v7M7 11h7M10.500 7.500v7" stroke="#0f6f68" strokeWidth="2"/>,
  minusm: <path d="M2 5h6M8 11h7" stroke="#0f6f68" strokeWidth="2"/>,
  win: <path d="M0 2.500L6.500 1.600v6H0zM7.500 1.400L16 0v7.600H7.500zM0 8.500h6.500v6L0 13.600zM7.500 8.500H16V16l-8.500-1.300z" fill="#fff"/>,
  mic: <><rect x="6" y="1" width="4" height="9" rx="2" fill="none" stroke="#777" strokeWidth="1.100"/><path d="M3.500 7c0 6 9 6 9 0M8 12v3M5 15h6" stroke="#777" fill="none"/></>,
  task: <path d="M4.500 2h7v12h-7zM1 4h1.500v8H1M15 4h-1.500v8H15" stroke="#fff" fill="none" strokeWidth="1.100"/>,
  fan: <path d="M8 8C3 8 1 6 1 3s3-2.500 5-1.500C8 2.500 8 5 8 8zM8 8c5 0 7-2 7-5s-3-2.500-5-1.500C8 2.500 8 5 8 8zM8 8c-5 0-7 2-7 5s3 2.500 5 1.500C8 13.500 8 11 8 8zM8 8c5 0 7 2 7 5s-3 2.500-5 1.500C8 13.500 8 11 8 8z" fill="#e9e9e9"/>,
  eWhite: <><text x="8" y="14" fontSize="19" fontFamily="DejaVu Sans" textAnchor="middle" fill="#e9e9e9">e</text><path d="M14 2C9 1 3 5 2 13" stroke="#e9e9e9" fill="none" strokeWidth=".8"/></>,
  swirl: <><circle cx="7" cy="10" r="5" fill="none" stroke="#ccc"/><circle cx="7" cy="10" r="2.500" fill="none" stroke="#aaa"/><path d="M11 1c2 0 3 1.500 3 3s1 2 1 2.500H8c0-.5 1-1 1-2.500s1-3 2-3z" fill="#e8a418"/></>,
  edge: <text x="8" y="14" fontSize="20" fontWeight="700" fontFamily="DejaVu Sans" textAnchor="middle" fill="#0a78d7">e</text>,
  ie: <><text x="8" y="14.500" fontSize="20" fontWeight="700" fontFamily="DejaVu Sans" textAnchor="middle" fill="#2ea6e6">e</text><ellipse cx="8" cy="9" rx="8.500" ry="4" fill="none" stroke="#f3c41c" transform="rotate(-30 8 9)"/></>,
  folder: <><rect x="1" y="3" width="14" height="11" fill="#f7d36b"/><path d="M1 3V1.500h6L8 3z" fill="#e6b94e"/><path d="M4 14v-3.500h8V14z" fill="#4ba3dc"/></>,
  gApp: <text x="8" y="14.500" fontSize="19" fontWeight="700" fontFamily="Liberation Sans" textAnchor="middle" fill="#1889e6">G</text>,
  gE: <><circle cx="8" cy="8" r="7.500" fill="#8ccf3e" stroke="#e9f5d6"/><text x="8" y="13" fontSize="14" fontFamily="DejaVu Sans" textAnchor="middle" fill="#fff">e</text></>,
  notes: <><rect x="1" y="1" width="14" height="14" fill="#f5a81d"/><rect x="3" y="3" width="9" height="10" fill="#f4ecd4" transform="rotate(-10 8 8)"/><path d="M5 6h5M5 8h5M5 10h4" stroke="#9a7b3f"/><path d="M15 1l-5 7" stroke="#c22" /></>,
  chevUp: <path d="M2 11l6-6 6 6" stroke="#eee" fill="none" strokeWidth="1.200"/>,
  plug: <><rect x="4" y="5" width="11" height="8" fill="#ddd" stroke="#eee"/><path d="M1 5h4M3 1v4" stroke="#eee"/><rect x="6" y="7" width="6" height="4" fill="#333"/></>,
  wifi: <path d="M1 8a10 10 0 0 1 12-4M3 11a7 7 0 0 1 8-3M5 14a3.500 3.500 0 0 1 4-2M14 8v7M11 15h4" stroke="#ddd" fill="none"/>,
  sound: <path d="M1 6h3l4-4v12l-4-4H1zM10 5c1.500 2 1.500 4 0 6M12 3c2.500 3 2.500 7 0 10" stroke="#ddd" fill="none"/>,
  kbd: <><rect x=".500" y="2.500" width="15" height="11" fill="none" stroke="#ddd"/><path d="M2 5h12M2 7.500h12M4 11h8" stroke="#ddd" strokeDasharray="1 1"/></>,
  sogou: <><rect x="1.500" y="1" width="13" height="14" rx="3" fill="#ee4a22" transform="rotate(-7 8 8)"/><text x="8" y="13" fontSize="13" fontWeight="700" fontFamily="Liberation Sans" textAnchor="middle" fill="#fff">S</text></>,
  actCenter: <><rect x="1" y="1" width="14" height="12" fill="#eee"/><path d="M3 4h10M3 7h10M3 10h10" stroke="#333"/></>,
  imeDots: <><circle cx="4" cy="6" r="1.700" fill="#1377cf"/><path d="M10 6c2 0 2 3 0 6" stroke="#1377cf" strokeWidth="2" fill="none"/></>,
  smile: <><circle cx="8" cy="8" r="6.500" fill="none" stroke="#1377cf" strokeWidth="1.500"/><circle cx="6" cy="6.500" r="1" fill="#1377cf"/><circle cx="10" cy="6.500" r="1" fill="#1377cf"/><path d="M5 10c2 2 4 2 6 0" stroke="#1377cf" fill="none"/></>,
  imeMic: <><rect x="5.500" y="1" width="5" height="9" rx="2.500" fill="#1377cf"/><path d="M3 7c0 6 10 6 10 0M8 12v3M5 15h6" stroke="#1377cf" fill="none" strokeWidth="1.200"/></>,
  imeKbd: <><rect x="1" y="3" width="14" height="10" rx="1.500" fill="#1377cf"/><path d="M3 6h10M3 8.500h10M5 11h6" stroke="#fff" strokeDasharray="1 1"/></>,
  imeUser: <><circle cx="7" cy="5" r="3" fill="#a9b9c6"/><path d="M1 14c0-4 3-5 6-5s4 1 4 2v3z" fill="#a9b9c6"/><rect x="9" y="10" width="6" height="5" fill="#fff" stroke="#a9b9c6"/></>,
  shirt: <path d="M4 2l4 1.500L12 2l3 3-2 2.500-1-.5v8H4V7l-1 .5L1 5z" fill="#1377cf"/>,
  wrench: <path d="M2 14l6-7c-1-3 1-6 5-6l-2 3 1.500 2L15 4c0 4-3 6-6 5l-5 6z" fill="#1377cf"/>,
  pin: <path d="M5 1h6v1l-1 1v5l2 2H4l2-2V3L5 2zM8 10v5" fill="#fff" stroke="#fff"/>,
  x: <path d="M3 3l10 10M13 3L3 13" stroke="#fff"/>,
  min: <path d="M2 8h12" stroke="#222"/>,
  restore: <path d="M2.500 5.500h8v8h-8zM5 5V2.500h8.500V11H11" stroke="#222" fill="none"/>,
  close: <path d="M2 2l12 12M14 2L2 14" stroke="#222"/>,
  sL: <path d="M10 3L5 8l5 5" stroke="#555" strokeWidth="2" fill="none"/>,
  sR: <path d="M6 3l5 5-5 5" stroke="#555" strokeWidth="2" fill="none"/>,
};

/* ---------- canvas ---------- */
const R = "#f00", D = "#930000", G = "#0a7d0a";
const circlePts = (cx, cy, r = 13) =>
  Array.from({ length: 11 }, (_, k) => {
    const a = (k / 11) * Math.PI * 2 - Math.PI / 2;
    return `${(cx + r * Math.cos(a)).toFixed(1)},${(cy + r * 1.08 * Math.sin(a)).toFixed(1)}`;
  }).join(" ");
const vBright = [180, 188, 377, 471, 566, 660, 754, 849, 943, 1132, 1228, 1321];
const vDark = [196, 216, 230, 256, 325, 427, 453, 826, 855, 999, 1154, 1158, 1172, 1201, 1204];
const axes = [
  [185, 181, "9"], [377, 181, "5"], [471, 181, "6"], [518, 181, "C"], [566, 181, "7"], [660, 181, "8"], [754, 181, "2"],
  [849, 181, "3"], [943, 181, "4"], [1132, 181, "5"], [1228, 181, "6"], [1321, 181, "7"],
  [183, 247, "B"], [518, 247, "B"], [183, 282, "A"], [518, 282, "A"], [183, 379, "A1"], [518, 379, "A1"],
];
const hatch = (x0, x1, y0, y1, step) => {
  const out = [];
  for (let x = x0; x < x1 + (y1 - y0); x += step) out.push(`M${x} ${y0}L${x - (y1 - y0)} ${y1}`);
  return out.join("");
};
const Rot = ({ x, y, t, fs = 17, len, c = "#bdbdbd" }) => (
  <text transform={`translate(${x} ${y}) rotate(-90)`} fontSize={fs} fontFamily="DejaVu Sans" fill={c} textLength={len} lengthAdjust="spacingAndGlyphs">{t}</text>
);
const Drawing = () => (
  <Canvas viewBox="170 168 1196 305" shapeRendering="crispEdges">
    <rect x="170" y="168" width="1196" height="305" fill="#000" />
    <rect x="195" y="168" width="123" height="8" fill="#000094" />
    <rect x="180" y="168" width="15" height="13" fill="#7a12d8" />
    <rect x="318" y="168" width="14" height="13" fill="#7a12d8" />
    <rect x="377" y="277" width="189" height="11" fill="#bcbcbc" />
    <rect x="754" y="278" width="95" height="8" fill="#bcbcbc" />
    <rect x="303" y="308" width="43" height="43" fill="#808000" />
    <rect x="331" y="308" width="2" height="43" fill="#b0608c" />
    <rect x="303" y="336" width="43" height="2" fill="#b0608c" />
    <rect x="372" y="242" width="6" height="5" fill="#7a12d8" />
    <rect x="378" y="245" width="7" height="2" fill="#7a12d8" />
    <rect x="659" y="392" width="95" height="14" fill="#000094" />
    <rect x="943" y="372" width="283" height="14" fill="#000094" />
    <rect x="943" y="313" width="56" height="7" fill="#ffe600" />
    <rect x="1139" y="168" width="83" height="6" fill="#00f000" />
    <rect x="1127" y="168" width="10" height="7" fill="#1b7fd8" />
    <rect x="1222" y="168" width="11" height="7" fill="#1b7fd8" />
    <rect x="1137" y="279" width="84" height="6" fill="#00f000" />
    <path d="M1130 273h5v7h6v5h-11zM1224 273h6v12h-11v-5h5z" fill="#7a12d8" />
    <rect x="1318" y="283" width="7" height="33" fill="#ffd21e" />
    <rect x="1318" y="317" width="7" height="59" fill="#00f000" />
    <rect x="1318" y="376" width="7" height="7" fill="#7a12d8" />
    <rect x="1318" y="383" width="7" height="43" fill="#00f000" />
    {vDark.map(x => <path key={x} d={`M${x} 168V379`} stroke={D} />)}
    <path d="M170 181H766M170 329H766M591 316H1366M170 374H1366M660 426H1366" stroke={D} />
    <path d="M573 168V378M617 168V378M631 378V426M531 316H591M531 426H660" stroke={G} />
    {vBright.map(x => <path key={x} d={`M${x} 168V379`} stroke={R} />)}
    <path d="M170 171H1366M170 247H1366M170 282H1366M170 379H1366" stroke={R} />
    <path d="M567 372l12 12M612 240l12 12M612 276l12 12M612 372l12 12M625 418l12 12" stroke={G} />
    <rect x="658" y="168" width="2" height="110" fill="#00f000" />
    <rect x="655" y="284" width="9" height="46" fill="#0a6ad8" />
    <rect x="654" y="278" width="11" height="8" fill="#0a6ad8" />
    <rect x="655" y="302" width="9" height="8" fill="#f08a10" />
    <rect x="655" y="326" width="9" height="8" fill="#f08a10" />
    <rect x="655" y="330" width="8" height="4" fill="#fff" />
    <path d="M659 278v9M655 282h9" stroke="#fff" />
    <g shapeRendering="auto">
      <clipPath id="arcclip"><path d="M471 283H656C635 315 600 330 566 330C540 330 500 325 471 283Z" /></clipPath>
      <clipPath id="boxclip"><rect x="754" y="286" width="95" height="30" /></clipPath>
      <path d={hatch(471, 660, 283, 331, 16)} stroke="#ddd" strokeWidth=".7" clipPath="url(#arcclip)" />
      <path d={hatch(754, 849, 286, 316, 16)} stroke="#ddd" strokeWidth=".7" clipPath="url(#boxclip)" />
      <path d="M471 283C500 325 540 330 566 330C600 330 635 315 656 286" fill="none" stroke="#fff" strokeWidth="1.800" />
      <path d="M566 282H655" stroke="#fff" strokeWidth="1.300" />
    </g>
    <path d="M640 316h15" stroke="#fff" strokeWidth="2" />
    <path d="M754 285V316H849M849 282V316H893M849 282H898M849 316H898M892 280V318" stroke="#fff" fill="none" strokeWidth="1.300" />
    <g shapeRendering="auto">
      {axes.map(([x, y, t]) => (
        <g key={x + t + y}>
          <polygon points={circlePts(x, y)} fill="none" stroke={G} />
          <text x={x} y={y + 6} fontSize="15" fontFamily="DejaVu Sans" textAnchor="middle" fill={t === "A" && x === 518 ? "#888" : "#cfcfcf"}>{t}</text>
        </g>
      ))}
      <Rot x={594} y={205} t="1360" fs={16} len={37} />
      <Rot x={637} y={225} t="2680" fs={16} len={34} />
      <Rot x={637} y={281} t="1200" fs={16} len={33} />
      <Rot x={637} y={418} t="1660" fs={16} len={34} />
      <Rot x={637} y={386} t="2260" fs={16} len={34} />
      <Rot x={637} y={352} t="0000" fs={16} len={36} />
      <Rot x={891} y={316} t="1200" fs={14} len={32} />
      <Rot x={672} y={327} t="2 5 0 0 0" fs={7} len={32} c="#666" />
      <Rot x={652} y={310} t="3 0 0" fs={7} len={20} c="#666" />
      <text x="234" y="388" fontSize="11" fill="#00e000" fontFamily="DejaVu Sans">Y</text>
      <text x="261" y="412" fontSize="13" fill="#e00000" fontFamily="DejaVu Sans">X</text>
    </g>
    <path d="M225 375l3.500 11h-2v34h-3v-34h-2z" fill="#00f000" />
    <path d="M226 421h38v-3l10 5-10 5v-3h-38z" fill="#f00" />
  </Canvas>
);

/* ---------- data ---------- */
const tree = [
  { o: 1, t: "常用构件类型" }, { c: "tAxis", t: "轴网(J)" }, { c: "tRaft", t: "筏板基础(M)" }, { c: "tCol", t: "框柱(Z)" },
  { c: "tWall", t: "剪力墙(Q)" }, { c: "tBeam", t: "梁(L)", on: 1 }, { c: "tSlab", t: "现浇板(B)" },
  { t: "轴线" }, { t: "柱" }, { t: "墙" }, { o: 1, t: "门窗洞" },
  { c: "tDoor", t: "门(M)" }, { c: "tWin", t: "窗(C)" }, { c: "tDW", t: "门联窗(A)" }, { c: "tHole", t: "墙洞(D)" }, { c: "tNiche", t: "壁龛(I)" },
  { c: "tLink", t: "连梁(G)" }, { c: "tLintel", t: "过梁(G)" }, { c: "tStripH", t: "带形洞" }, { c: "tStripW", t: "带形窗" },
  { t: "梁" }, { t: "板" }, { t: "基础" }, { t: "其它" }, { o: 1, t: "自定义" },
  { c: "tPt", t: "自定义点" }, { c: "tLine", t: "自定义线(X)", nw: { l: 145, w: 16, s: "NE" } }, { c: "tFace", t: "自定义面" }, { c: "tDim", t: "尺寸标注(W)" },
  { t: "CAD识别", nw: { l: 107, w: 24, s: "NEW" } },
];
const cols = [31, 42, 60, 61, 41, 41, 41, 41, 42, 99, 82, 80, 82, 81, 80, 82, 80, 82, 82, 90];
const tableWidth = cols.reduce((a, b) => a + b, 0);
const Arrow = ({ open }) => (
  <Chevron viewBox="0 0 9 9">
    {open ? <path d="M0 2.500l4.500 4 4.500-4" stroke="#444" strokeWidth="1.500" fill="none" /> : <path d="M2.500 0l4 4.500-4 4.500" stroke="#b4b4b4" strokeWidth="1.500" fill="none" />}
  </Chevron>
);
const Tree1 = ({ r }) => (
  <TreeRow $child={!!r.c}>
    {!r.c && <Arrow open={r.o} />}
    <Sel $on={r.on} $child={!!r.c}>
      <Ic n={r.c || (r.o ? "folderO" : "folderC")} />
      <span><Sim t={r.t} /></span>
    </Sel>
    {r.nw && <>
      <Ic n="news" s={15} />
      <NewTag $l={r.nw.l} $w={r.nw.w}>{r.nw.s}</NewTag>
    </>}
  </TreeRow>
);
const titleParts = "广联达BIM钢筋算量软件 GGJ2013 - [C:\\Users\\Administrator.PC-20141127NRHM\\Desktop\\白龙村-2016-01-12-13-27-07(2166版).GGJ12]"
  .split(/([\x00-\x7f]+)/);

/* ---------- page ---------- */
export default function App() {
  return (
    <Root>
      <Global />
      <TitleBar>
        <Ic n="logo" />
        <TitleText>
          {titleParts.map((p, k) => (k % 2 ? <TitleLatin key={k}>{p}</TitleLatin> : <span key={k}>{p}</span>))}
        </TitleText>
        <WinButtons>
          <WinBtn><Ic n="min" s={13} /></WinBtn>
          <WinBtn><Ic n="restore" s={13} /></WinBtn>
          <WinBtn><Ic n="close" s={13} /></WinBtn>
        </WinButtons>
      </TitleBar>

      <MenuBar>
        <MenuItem $w={48} $ml={7}>文件(F)</MenuItem>
        <MenuItem $w={49}>编辑(E)</MenuItem>
        <MenuItem $w={48}>楼层(L)</MenuItem>
        <MenuItem $w={52}>构件(N)</MenuItem>
        <MenuItem $w={51}>绘图(D)</MenuItem>
        <MenuItem $w={54}>修改(M)</MenuItem>
        <MenuItem $w={64}>钢筋量(Q)</MenuItem>
        <MenuItem $w={50}>视图(V)</MenuItem>
        <MenuItem $w={49}>工具(T)</MenuItem>
        <MenuItem $w={61}>云应用(Y)</MenuItem>
        <MenuItem $w={70}>BIM应用(I)</MenuItem>
        <MenuItem $w={73}>在线服务(S)</MenuItem>
        <MenuItem $w={51}>帮助(H)</MenuItem>
        <MenuItem $w={61}>版本号(B)</MenuItem>
        <MenuItem $w={86}><Ic n="newdoc" />新建变更<Drop $ml={4} /></MenuItem>
        <MenuItem $w={63}><Ic n="blob" />广小二</MenuItem>
        <Hint>如何快速布置自定义范..</Hint>
        <MenuItem $w={118}><Ic n="user" />13907298339<Drop $ml={3} /></MenuItem>
        <MenuItem $w={53}>造价豆:0</MenuItem>
        <MenuItem $w={20}><Ic n="bell" /></MenuItem>
        <Chev $r={2} $t={4}>»</Chev>
      </MenuBar>

      <Row $h={30}>
        <Seg $w={150} $pl={3}>
          <Tool i="page" w={25} />
          <Tool i="open" w={35} drop dm={2} />
          <Tool i="save" w={22} />
          <Sep $w={8} />
          <Tool i="undo" w={30} drop dm={6} />
          <Chev $r={3}>»</Chev>
        </Seg>
        <Seg $w={600} $ml={3} $pl={4}>
          <Tool i="define" t="定义" w={52} />
          <Tool i="sigma" t="汇总计算" w={74} />
          <Tool i="cloud" t="云检查" w={64} />
          <Tool i="level" t="平齐板顶" w={74} />
          <Tool i="binoc" t="查找图元" w={77} />
          <Tool i="glasses" t="查看钢筋量" w={86} />
          <Tool i="batch" t="批量选择" w={75} />
          <Tool i="grid3d" t="钢筋三维" w={70} />
          <Chev $r={3}>»</Chev>
        </Seg>
        <Seg $w={609} $ml={4} $pl={1}>
          <Combo $w={61} $mr={5}><Tool i="rect2d" t="二维" w={46} /></Combo>
          <Tool i="cube" t="俯视" w={64} drop />
          <Tool i="orbit" t="动态观察" w={74} />
          <Tool i="box3d" t="局部三维" w={75} />
          <Sep $w={6} />
          <Tool i="full" t="全屏" w={53} />
          <Tool i="zoom" t="缩放" w={62} drop />
          <Tool i="hand" t="平移" w={62} drop />
          <Tool i="screen" t="屏幕旋转" w={78} drop dm={3} />
          <Chev $r={2}>»</Chev>
        </Seg>
      </Row>

      <Body>
        <Nav>
          <NavHead>
            <span>模块导航栏</span>
            <Ic n="pin" s={12} ml={69} mr={6} />
            <Ic n="x" s={11} />
          </NavHead>
          <NavBtn $h={22}>工程设置</NavBtn>
          <NavBtn $h={22}>绘图输入</NavBtn>
          <TreeBar><Ic n="plusp" /><Ic n="minusm" /></TreeBar>
          <Tree>
            <Guide $l={13} $t={8} $h={464} />
            <Guide $l={32} $t={16} $h={88} />
            <Guide $l={32} $t={176} $h={136} />
            <Guide $l={32} $t={400} $h={64} />
            {tree.map(r => <Tree1 key={r.t + (r.c || "")} r={r} />)}
          </Tree>
          <NavBtn $h={20}>单构件输入</NavBtn>
          <NavBtn $h={22}>报表预览</NavBtn>
        </Nav>
        <Gutter />
        <Main>
          <Row $h={27} $pl={2}>
            <Seg $w={789} $h={25} $pl={2}>
              <Grip $w={6} />
              <Tool i="brush" t="删除" w={51} />
              <Sep $w={7} />
              <Tool i="copy" t="复制" w={52} />
              <Tool i="mirror" t="镜像" w={50} />
              <Sep $w={7} />
              <Tool i="move" t="移动" w={50} />
              <Tool i="rotate" t="旋转" w={52} />
              <Sep $w={6} />
              <Tool i="extend" t="延伸" w={51} />
              <Tool i="trim" t="修剪" w={50} />
              <Sep $w={6} />
              <Tool i="breakL" t="打断" w={51} />
              <Tool i="merge" t="合并" w={51} />
              <Tool i="split" t="分割" w={52} off />
              <Sep $w={7} />
              <Tool i="align" t="对齐" w={58} drop dm={3} />
              <Tool i="offset" t="偏移" w={51} />
              <Tool i="stretch" t="拉伸" w={51} />
              <Sep $w={5} />
              <Tool i="gripG" t="设置夹点" w={68} off />
            </Seg>
          </Row>
          <Row $h={29} $pl={2}>
            <Seg $w={636} $pl={9}>
              <Combo $w={54} $mr={4}><ComboText>首层</ComboText></Combo>
              <Combo $w={70} $mr={2}><ComboText>常用构件类</ComboText></Combo>
              <Combo $w={70} $mr={1}><ComboText>梁</ComboText></Combo>
              <Combo $w={71} $mr={2}><ComboText>雨篷梁-1</ComboText></Combo>
              <Combo $w={70} $mr={4}><ComboText>分层1</ComboText></Combo>
              <Sep $w={7} />
              <Tool i="attr" t="属性" w={51} />
              <Tool i="pen" t="编辑钢筋" w={75} />
              <Tool i="list" t="构件列表" w={76} />
              <Tool i="dropper" t="拾取构件" w={68} />
            </Seg>
            <Seg $w={422} $ml={3} $pl={2}>
              <Grip $w={13} />
              <Tool i="two" t="两点" w={47} g={0} />
              <Tool i="par" t="平行" w={50} />
              <Tool i="ang" t="点角" w={64} drop />
              <Tool i="arcx" t="三点辅轴" w={86} drop />
              <Tool i="brush" t="删除辅轴" w={76} />
              <Tool i="dim" t="尺寸标注" w={84} drop />
            </Seg>
          </Row>
          <Row $h={28} $pl={2}>
            <Seg $w={1160} $h={25} $pl={2}>
              <Grip $w={4} />
              <Flat $w={51} $g={6}><Ic n="cursor" s={14} />选择</Flat>
              <Tool w={14} drop dm={2} />
              <Sep $w={9} />
              <Tool i="line" t="直线" w={50} />
              <Tool i="ptlen" t="点加长度" w={74} />
              <Tool i="arc" t="三点画弧" w={84} drop />
              <Combo $w={57} $mr={5} />
              <Tool i="rect2d" t="矩形" w={51} />
              <Sep $w={6} />
              <Tool i="smart" t="智能布置" w={79} drop dm={4} />
              <Sep $w={6} />
              <Tool i="funnel" t="修改梁段属性" w={101} g={7} />
              <Tool i="mark" t="原位标注" w={87} drop />
              <Tool i="reup" t="重提梁跨" w={89} drop />
              <Tool i="broom" t="梁跨数据复制" w={111} drop />
              <Tool i="batchsup" t="批量识别梁支座" w={110} />
              <Tool i="apply" t="应用到同名梁" w={92} />
              <Chev $r={4}>»</Chev>
            </Seg>
            <Grip $w={6} $ml={2} />
          </Row>

          <Drawing />

          <SnapBar>
            <Seg $w={208} $h={25} $pl={0}>
              <Grip $w={9} />
              <Tool i="ortho" t="正交" w={48} />
              <Flat $w={75} $pl={3} $g={2}><Ic n="snap" />对象捕捉</Flat>
              <Flat $w={75} $pl={3} $g={2}><Ic n="input" />动态输入</Flat>
            </Seg>
            <Seg $w={266} $h={25} $ml={2} $pl={2}>
              <Grip $w={9} />
              <Tool i="cross" t="交点" w={47} />
              <Flat $w={51} $pl={3} $g={3}><Ic n="perp" />垂点</Flat>
              <Flat $w={51} $pl={3} $g={3}><Ic n="mid" />中点</Flat>
              <Tool w={4} />
              <Tool i="apex" t="顶点" w={51} />
              <Tool i="coord" t="坐标" w={51} />
            </Seg>
            <Seg $h={25} $w={412} $ml={3} $pl={4}>
              <Combo $w={62}>不偏移</Combo>
              <Sep $w={3} />
              <SnapLabel $dim $w={21}>X=</SnapLabel>
              <Spin $w={56}>0<SpinArrows /></Spin>
              <SnapLabel $ml={2} $w={26}>mm</SnapLabel>
              <SnapLabel $dim $w={18}>Y=</SnapLabel>
              <Spin $w={56}>0<SpinArrows /></Spin>
              <SnapLabel $ml={3} $w={27}>mm</SnapLabel>
              <Check $ml={3} />
              <SnapLabel $ml={8} $w={29}>旋转</SnapLabel>
              <Spin $w={64} $pr={16}>0.000<SpinArrows /></Spin>
              <SnapLabel $ml={4}>°</SnapLabel>
            </Seg>
          </SnapBar>

          <TablePanel>
            <TableGrip><Svg $s={10} viewBox="0 0 10 9">{I.closeX}</Svg></TableGrip>
            <TableMain>
              <TableTools>
                <TableAction $w={88}><Ic n="copyT" />复制跨数据</TableAction>
                <TableAction $w={88} $off><Ic n="pasteT" />粘贴跨数据</TableAction>
                <TableAction $w={94}>输入当前列数据</TableAction>
                <TableAction $w={94}>删除当前列数据</TableAction>
                <TableAction $w={58}>页面设置</TableAction>
                <TableAction $w={70}>调换起始跨</TableAction>
                <TableAction $w={80}>悬挑钢筋代号</TableAction>
              </TableTools>
              <TableWrap>
                <Grid $w={tableWidth}>
                  <colgroup>{cols.map((w, k) => <col key={k} width={w} />)}</colgroup>
                  <thead>
                    <TH $h={20}>
                      <th rowSpan={2} />
                      <th rowSpan={2}>跨号</th>
                      <th colSpan={2}>标高<Sim t="(m)" /></th>
                      <th colSpan={7}>构件尺寸<Sim t="(mm)" /></th>
                      <th rowSpan={2}>上通长筋</th>
                      <th colSpan={3}>上部钢筋</th>
                      <th colSpan={2}>下部钢筋</th>
                      <th colSpan={3}>侧面钢筋</th>
                    </TH>
                    <TH $h={19}>
                      <th>起点标高</th><th>终点标高</th>
                      <th><Sim t="A1" /></th><th><Sim t="A2" /></th><th><Sim t="A3" /></th><th><Sim t="A4" /></th>
                      <th>跨长</th>
                      <HotTh>截面<Sim t="(B*H)" /></HotTh>
                      <th>距左边线距离</th>
                      <th>左支座钢筋</th><th>跨中钢筋</th><th>右支座钢筋</th>
                      <th>下通长筋</th><th>下部钢筋</th>
                      <th>侧面通长筋</th><th>侧面原位钢筋</th><th>拉筋</th>
                    </TH>
                  </thead>
                  <tbody>
                    <tr>
                      <RowHead><Mono>1</Mono></RowHead>
                      <LeftCell><Mono>0</Mono></LeftCell>
                      <LeftCell><Mono>4.45</Mono></LeftCell>
                      <LeftCell $pl={2}><Mono>4.45</Mono></LeftCell>
                      <td><Mono>(150)</Mono></td><td><Mono>(150)</Mono></td><td /><td />
                      <td><Mono>(1675)</Mono></td>
                      <ActiveCell>300*600/500<Handle /></ActiveCell>
                      <LeftCell><Mono>(150)</Mono></LeftCell>
                      <LeftCell><Mono>3</Mono><Bar>虫</Bar><Mono>18</Mono></LeftCell>
                      <td /><td /><td />
                      <LeftCell><Mono>2</Mono><Bar>虫</Bar><Mono>14</Mono></LeftCell>
                      <td />
                      <LeftCell><Mono>N4</Mono><Bar>虫</Bar><Mono>12</Mono></LeftCell>
                      <td /><td />
                    </tr>
                  </tbody>
                </Grid>
                <Filler />
                <HScroll>
                  <ScrollBtn><Ic n="sL" s={10} /></ScrollBtn>
                  <Thumb />
                  <ScrollBtn $ml={608}><Ic n="sR" s={10} /></ScrollBtn>
                </HScroll>
              </TableWrap>
            </TableMain>
          </TablePanel>
        </Main>
      </Body>

      <StatusBar>
        <StatusCell $w={148}><Mono>X=72906 Y=7687</Mono></StatusCell>
        <StatusCell $w={78}><Sim t="层高:4.5m" /></StatusCell>
        <StatusCell $w={98}><Sim t="底标高:-0.05m" /></StatusCell>
        <StatusCell $w={48}><Mono>1(1)</Mono></StatusCell>
        <StatusCell $w={912}>按鼠标左键指定第一个角点，或拾取构件图元</StatusCell>
        <StatusCell $w={72}><Mono>52.7 FPS</Mono></StatusCell>
      </StatusBar>

      <Taskbar>
        <StartBtn><Ic n="win" s={16} /></StartBtn>
        <Search>
          <Svg $s={21} viewBox="0 0 21 21"><circle cx="10.500" cy="10.500" r="9" fill="none" stroke="#d8d8d8" strokeWidth="2" /></Svg>
          在这里输入你要搜索的内容
          <SearchMic><Ic n="mic" s={18} /></SearchMic>
        </Search>
        <Slot $w={47}><Ic n="task" s={20} /></Slot>
        <Slot $w={54}><Ic n="fan" s={22} /></Slot>
        <Slot $w={50}><Ic n="eWhite" s={22} /></Slot>
        <Slot $w={53}><Ic n="swirl" s={24} /></Slot>
        <Slot $w={48}><Ic n="edge" s={22} /></Slot>
        <Slot $w={52}><Ic n="ie" s={24} /></Slot>
        <Slot $w={48}><Ic n="folder" s={23} /></Slot>
        <Slot $w={46} $run><Ic n="gApp" s={24} /></Slot>
        <Slot $w={52} $run><Ic n="gE" s={22} /></Slot>
        <Slot $w={46} $active $run><Ic n="logo" s={24} /></Slot>
        <Slot $w={50} $run><Ic n="notes" s={24} /></Slot>
        <TrayText $w={46}>链接</TrayText>
        <TrayText $w={64} $lh={20}><span>27%</span><span>CPU使用</span></TrayText>
        <Slot $w={30}><Ic n="chevUp" s={14} /></Slot>
        <Slot $w={26}><Ic n="plug" s={16} /></Slot>
        <Slot $w={23}><Ic n="wifi" s={16} /></Slot>
        <Slot $w={21}><Ic n="sound" s={16} /></Slot>
        <Slot $w={34}><Ic n="kbd" s={20} /></Slot>
        <TrayText $w={24} $fs={14}>中</TrayText>
        <Slot $w={30}><Ic n="sogou" s={17} /></Slot>
        <TrayText $w={80} $lh={20}><span>18:16</span><span>2018/1/30</span></TrayText>
        <Notify><Ic n="actCenter" s={17} /><NotifyBadge>20</NotifyBadge></Notify>
      </Taskbar>

      <Annot viewBox="0 0 1366 768">
        <ellipse cx="816" cy="152" rx="50" ry="27" fill="none" stroke="#f00" strokeWidth="7" />
        <ellipse cx="232" cy="589" rx="55" ry="31" fill="none" stroke="#f00" strokeWidth="7" />
        <ellipse cx="624" cy="574" rx="92" ry="58" fill="none" stroke="#f00" strokeWidth="8" />
      </Annot>
      <Badge>70</Badge>
      <Ime>
        <ImeLogo>S</ImeLogo>
        <ImeBody>
          <ImeZh>中</ImeZh>
          <Ic n="imeDots" s={16} />
          <Ic n="smile" s={17} />
          <Ic n="imeMic" s={17} />
          <Ic n="imeKbd" s={17} />
          <Ic n="imeUser" s={17} />
          <Ic n="shirt" s={17} />
          <Ic n="wrench" s={17} />
        </ImeBody>
      </Ime>
    </Root>
  );
}
